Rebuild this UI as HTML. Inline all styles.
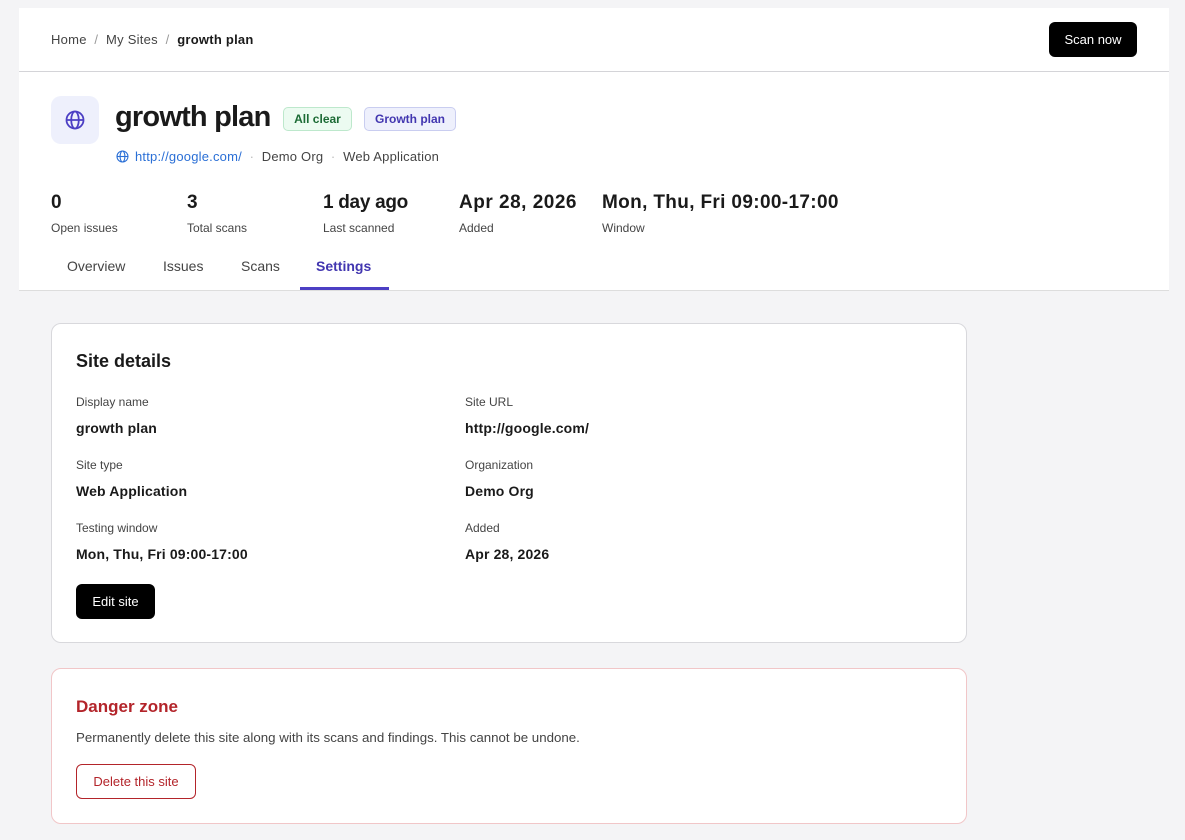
<!DOCTYPE html>
<html><head><style>
*{box-sizing:border-box;margin:0;padding:0}
body{width:1185px;height:840px;background:#f4f4f6;font-family:"Liberation Sans",sans-serif;color:#1a1a1a;position:relative;overflow:hidden}
.abs{position:absolute;white-space:nowrap}
.panel{position:absolute;left:19px;top:8px;width:1150px;height:283px;background:#fff;border-bottom:1px solid #ddd}
.card{position:absolute;left:51px;width:916px;background:#fff;border:1px solid #d8d8dc;border-radius:10px}
.lbl{font-size:12px;color:#444}
.val{font-size:14px;font-weight:bold;color:#1a1a1a;letter-spacing:0.15px}
</style></head><body>
<div class="panel">
  <div style="position:absolute;left:0;top:63px;width:1150px;height:1px;background:#d4d4d8"></div>
</div>
<div class="abs" style="left:51px;top:32px;font-size:13px;color:#444;letter-spacing:0.25px">Home &nbsp;<span style="color:#999">/</span>&nbsp; My Sites &nbsp;<span style="color:#999">/</span>&nbsp; <b style="color:#1a1a1a">growth plan</b></div>
<div class="abs" style="left:1049px;top:22px;width:88px;height:35px;background:#000;color:#fff;border-radius:6px;font-size:13px;line-height:35px;text-align:center">Scan now</div>

<div class="abs" style="left:51px;top:96px;width:48px;height:48px;background:#eef0fc;border-radius:10px">
<svg width="48" height="48" viewBox="0 0 48 48"><g fill="none" stroke="#4c3fc4" stroke-width="1.8"><circle cx="24" cy="24" r="8.5"/><ellipse cx="24" cy="24" rx="3.8" ry="8.5"/><line x1="15.5" y1="24" x2="32.5" y2="24"/></g></svg></div>
<div class="abs" style="left:115px;top:101px;font-size:29px;font-weight:bold;letter-spacing:-0.8px">growth plan</div>
<div class="abs" style="left:283px;top:107px;width:69px;height:24px;border:1px solid #bde8cc;background:#ecfbf1;color:#1c6b35;border-radius:5px;font-size:12px;font-weight:bold;line-height:22px;text-align:center">All clear</div>
<div class="abs" style="left:364px;top:107px;width:92px;height:24px;border:1px solid #c9cdf0;background:#eef0fc;color:#4236b0;border-radius:5px;font-size:12px;font-weight:bold;line-height:22px;text-align:center">Growth plan</div>
<svg class="abs" style="left:116px;top:150px" width="13" height="13" viewBox="0 0 13 13"><g fill="none" stroke="#2a6fd6" stroke-width="1.1"><circle cx="6.5" cy="6.5" r="5.5"/><ellipse cx="6.5" cy="6.5" rx="2.4" ry="5.5"/><line x1="1" y1="6.5" x2="12" y2="6.5"/></g></svg>
<div class="abs" style="left:135px;top:149px;font-size:13px;color:#2a6fd6;letter-spacing:0.2px">http://google.com/ <span style="color:#bbb">&nbsp;·&nbsp;</span> <span style="color:#444">Demo Org</span> <span style="color:#bbb">&nbsp;·&nbsp;</span> <span style="color:#444">Web Application</span></div>

<div class="abs" style="left:51px;top:192px;font-size:19px;font-weight:bold">0</div>
<div class="abs lbl" style="left:51px;top:221px">Open issues</div>
<div class="abs" style="left:187px;top:192px;font-size:19px;font-weight:bold">3</div>
<div class="abs lbl" style="left:187px;top:221px">Total scans</div>
<div class="abs" style="left:323px;top:192px;font-size:19px;font-weight:bold;letter-spacing:-0.3px">1 day ago</div>
<div class="abs lbl" style="left:323px;top:221px">Last scanned</div>
<div class="abs" style="left:459px;top:192px;font-size:19px;font-weight:bold;letter-spacing:0.5px">Apr 28, 2026</div>
<div class="abs lbl" style="left:459px;top:221px">Added</div>
<div class="abs" style="left:602px;top:192px;font-size:19px;font-weight:bold;letter-spacing:0.35px">Mon, Thu, Fri 09:00-17:00</div>
<div class="abs lbl" style="left:602px;top:221px">Window</div>

<div class="abs" style="left:67px;top:258px;font-size:14px;color:#444">Overview</div>
<div class="abs" style="left:163px;top:258px;font-size:14px;color:#444">Issues</div>
<div class="abs" style="left:241px;top:258px;font-size:14px;color:#444">Scans</div>
<div class="abs" style="left:316px;top:258px;font-size:14px;color:#4236b0;font-weight:bold">Settings</div>
<div class="abs" style="left:300px;top:287px;width:89px;height:3px;background:#4c3fc4"></div>

<div class="card" style="top:323px;height:320px"></div>
<div class="abs" style="left:76px;top:351px;font-size:18px;font-weight:bold">Site details</div>
<div class="abs lbl" style="left:76px;top:395px">Display name</div>
<div class="abs val" style="left:76px;top:420px">growth plan</div>
<div class="abs lbl" style="left:76px;top:458px">Site type</div>
<div class="abs val" style="left:76px;top:483px">Web Application</div>
<div class="abs lbl" style="left:76px;top:521px">Testing window</div>
<div class="abs val" style="left:76px;top:546px">Mon, Thu, Fri 09:00-17:00</div>
<div class="abs lbl" style="left:465px;top:395px">Site URL</div>
<div class="abs val" style="left:465px;top:420px">http://google.com/</div>
<div class="abs lbl" style="left:465px;top:458px">Organization</div>
<div class="abs val" style="left:465px;top:483px">Demo Org</div>
<div class="abs lbl" style="left:465px;top:521px">Added</div>
<div class="abs val" style="left:465px;top:546px">Apr 28, 2026</div>
<div class="abs" style="left:76px;top:584px;width:79px;height:35px;background:#000;color:#fff;border-radius:6px;font-size:13px;line-height:35px;text-align:center">Edit site</div>

<div class="card" style="top:668px;height:156px;border-color:#f1c6c8"></div>
<div class="abs" style="left:76px;top:697px;font-size:17px;font-weight:bold;color:#b3242a">Danger zone</div>
<div class="abs" style="left:76px;top:730px;font-size:13.3px;color:#444">Permanently delete this site along with its scans and findings. This cannot be undone.</div>
<div class="abs" style="left:76px;top:764px;width:120px;height:35px;border:1px solid #b3242a;color:#b3242a;border-radius:6px;font-size:13px;line-height:33px;text-align:center;background:#fff">Delete this site</div>
</body></html>
